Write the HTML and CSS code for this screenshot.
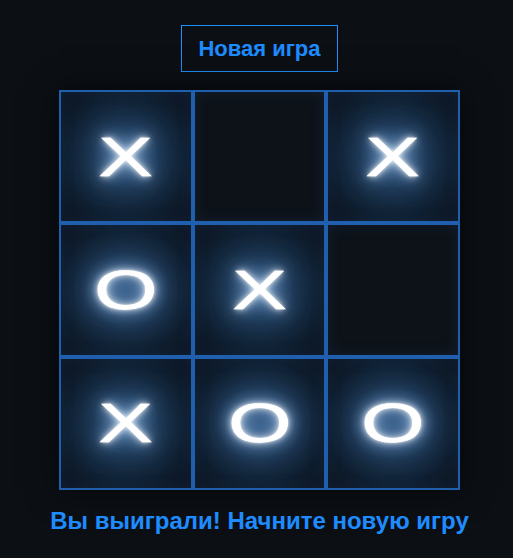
FILE: index.html
```html
<!DOCTYPE html>
<html lang="ru">
<head>
<meta charset="utf-8">
<link rel="stylesheet" href="styles.css">
</head>
<body>
<main class="app">
  <button class="new-game" type="button">Новая игра</button>
  <div class="board">
    <div class="cell filled"><span class="mark">X</span></div>
    <div class="cell"></div>
    <div class="cell filled"><span class="mark">X</span></div>
    <div class="cell filled"><span class="mark">O</span></div>
    <div class="cell filled"><span class="mark">X</span></div>
    <div class="cell"></div>
    <div class="cell filled"><span class="mark">X</span></div>
    <div class="cell filled"><span class="mark">O</span></div>
    <div class="cell filled"><span class="mark">O</span></div>
  </div>
  <p class="status">Вы выиграли! Начните новую игру</p>
</main>
</body>
</html>
```
FILE: styles.css
```css
html, body {
  margin: 0;
  padding: 0;
  background: #0c1015;
  height: 100%;
}
body {
  font-family: "Liberation Sans", Arial, sans-serif;
}
.app {
  display: flex;
  flex-direction: column;
  align-items: center;
  padding: 25px 0 0 6px;
}
.new-game {
  -webkit-appearance: none;
  appearance: none;
  font-family: "Liberation Sans", Arial, sans-serif;
  font-size: 22px;
  font-weight: bold;
  line-height: 25px;
  color: #1e8cff;
  background: transparent;
  border: 1px solid #1e90ff;
  padding: 10px 16px;
  margin: 0;
  cursor: pointer;
}
.board {
  margin-top: 18px;
  width: 401px;
  height: 400px;
  display: grid;
  grid-template-columns: repeat(3, 1fr);
  grid-template-rows: repeat(3, 1fr);
  box-shadow: 0 0 30px rgba(0, 0, 0, 0.7);
}
.cell {
  border: 2px solid #1f5fae;
  background: #0d1218;
  box-shadow: inset 0 0 14px rgba(30, 70, 120, 0.25);
  display: flex;
  align-items: center;
  justify-content: center;
  overflow: hidden;
}
.filled {
  background: radial-gradient(circle at center, #22425f 0%, #19314a 32%, #111d2c 72%, #0e151f 100%);
}
.mark {
  font-size: 56px;
  line-height: 1;
  color: #ffffff;
  display: inline-block;
  transform: scaleX(1.45);
  -webkit-text-stroke: 0.6px #ffffff;
  text-shadow:
    0 0 2px #ffffff,
    0 0 6px #ffffff,
    0 0 12px rgba(200, 225, 255, 0.95),
    0 0 20px rgba(120, 170, 230, 0.95),
    0 0 32px rgba(80, 135, 200, 0.95),
    0 0 48px rgba(55, 105, 170, 0.9),
    0 0 64px rgba(40, 85, 145, 0.7);
}
.status {
  margin: 17px 0 0;
  font-size: 24px;
  line-height: 28px;
  font-weight: bold;
  color: #1e8cff;
}
```
